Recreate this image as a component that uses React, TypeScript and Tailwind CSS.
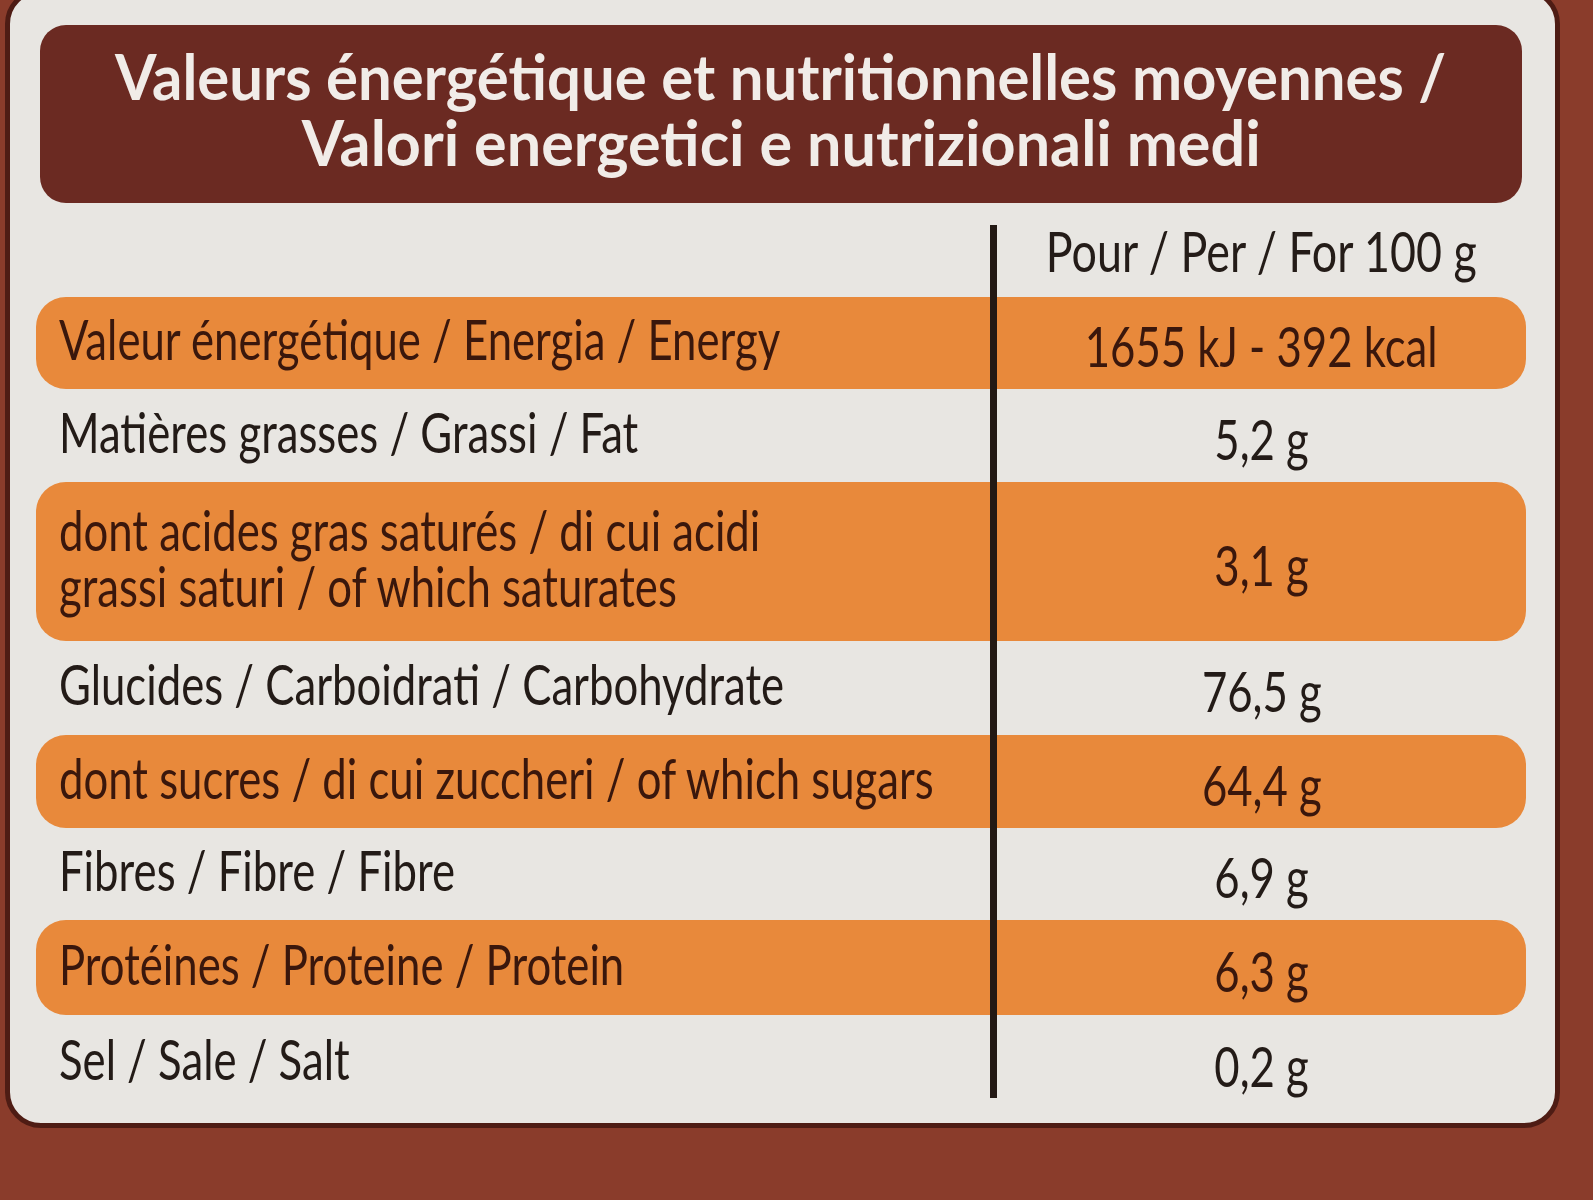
import React from "react";

type Row = {
  label: string[];
  value: string;
  orange: boolean;
  height: string;
};

const rows: Row[] = [
  { label: ["Valeur énergétique / Energia / Energy"], value: "1655 kJ - 392 kcal", orange: true, height: "h-[92px]" },
  { label: ["Matières grasses / Grassi / Fat"], value: "5,2 g", orange: false, height: "h-[93px]" },
  {
    label: ["dont acides gras saturés / di cui acidi", "grassi saturi / of which saturates"],
    value: "3,1 g",
    orange: true,
    height: "h-[159px]",
  },
  { label: ["Glucides / Carboidrati / Carbohydrate"], value: "76,5 g", orange: false, height: "h-[94px]" },
  { label: ["dont sucres / di cui zuccheri / of which sugars"], value: "64,4 g", orange: true, height: "h-[93px]" },
  { label: ["Fibres / Fibre / Fibre"], value: "6,9 g", orange: false, height: "h-[92px]" },
  { label: ["Protéines / Proteine / Protein"], value: "6,3 g", orange: true, height: "h-[95px]" },
  { label: ["Sel / Sale / Salt"], value: "0,2 g", orange: false, height: "h-[95px]" },
];

const App: React.FC = () => {
  return (
    <div className="w-[1593px] h-[1200px] overflow-hidden bg-[#8a3c2b] font-['Lato','Noto_Sans',sans-serif]">
      <div className="ml-[5px] -mt-[12px] w-[1555px] h-[1140px] rounded-[36px] border-[5px] border-[#4e1c14] bg-[#e8e6e2] pl-[26px] pr-[29px] pt-[32px]">
        {/* title bar */}
        <div className="mx-[4px] h-[178px] rounded-[26px] bg-[#6b2a22] flex flex-col items-center justify-center pb-[10px] text-[#f1ece8] font-bold text-[63px] leading-[66px]">
          <span className="inline-block whitespace-nowrap scale-x-[0.95]">
            Valeurs énergétique et nutritionnelles moyennes /
          </span>
          <span className="inline-block whitespace-nowrap scale-x-[0.97]">Valori energetici e nutrizionali medi</span>
        </div>

        {/* column header */}
        <div className="flex h-[94px]">
          <div className="w-[954px] shrink-0" />
          <div className="w-[7px] shrink-0 mt-[22px] bg-[#231914]" />
          <div className="flex-1 min-w-0 flex items-center justify-center pt-[2px] text-[#241c18] text-[56px] leading-none">
            <span className="inline-block whitespace-nowrap scale-x-[0.8]">Pour / Per / For 100 g</span>
          </div>
        </div>

        {rows.map((row, i) => (
          <div
            key={i}
            className={`flex ${row.height} ${row.orange ? "bg-[#e8893b] rounded-[30px] text-[#3a170c]" : "text-[#231b17]"}`}
          >
            <div className="w-[954px] shrink-0 flex flex-col justify-center pl-[23px] pb-[8px] text-[56px] leading-[56px]">
              {row.label.map((l, j) => (
                <span key={j} className="inline-block self-start whitespace-nowrap origin-left scale-x-[0.78]">
                  {l}
                </span>
              ))}
            </div>
            <div className={`w-[7px] shrink-0 bg-[#231914] ${i === rows.length - 1 ? "mb-[12px]" : ""}`} />
            <div className="flex-1 min-w-0 flex items-center justify-center pt-[6px] text-[56px] leading-none">
              <span className="inline-block whitespace-nowrap scale-x-[0.78]">{row.value}</span>
            </div>
          </div>
        ))}
      </div>
    </div>
  );
};

export default App;
